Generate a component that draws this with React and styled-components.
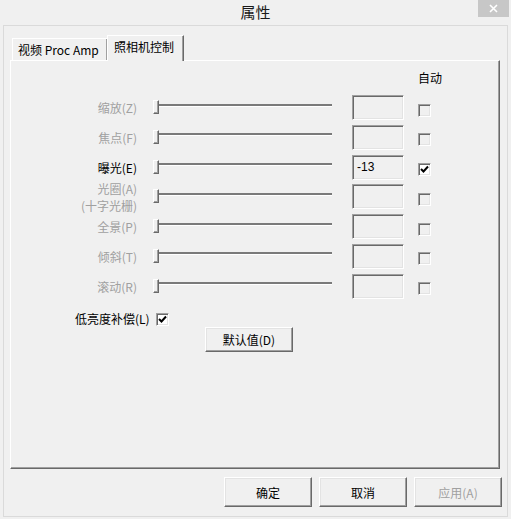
import React from 'react'
import styled, { createGlobalStyle } from 'styled-components'

const GlobalStyle = createGlobalStyle`
  html, body {
    margin: 0;
    padding: 0;
    background: #f0f0f0;
  }
  body {
    font-family: "Noto Sans CJK SC", "Noto Sans", sans-serif;
    font-size: 12px;
    color: #000;
  }
`

const Window = styled.div`
  width: 511px;
  height: 519px;
  background: #f0f0f0;
  display: flex;
  flex-direction: column;
`

const TitleBar = styled.div`
  height: 25px;
  display: grid;
  grid-template-columns: 1fr auto 1fr;
  align-items: start;
`

const Title = styled.div`
  grid-column: 2;
  font-size: 15px;
  line-height: 24px;
  color: #1a1a1a;
`

const CloseButton = styled.div`
  grid-column: 3;
  justify-self: end;
  margin-right: 2px;
  width: 31px;
  height: 17px;
  background: #c7c7c7;
  display: flex;
  align-items: center;
  justify-content: center;
`

const Body = styled.div`
  flex: 1;
  margin: 0 3px 2px 3px;
  border: 1px solid #dadada;
  padding: 9px 5px 9px 6px;
  display: flex;
  flex-direction: column;
`

const TabStrip = styled.div`
  height: 25px;
  margin-left: 2px;
  display: flex;
  align-items: flex-end;
  position: relative;
  z-index: 1;
`

const Tab = styled.div`
  box-sizing: border-box;
  width: ${p => p.$w}px;
  height: ${p => (p.$active ? 26 : 22)}px;
  margin-bottom: ${p => (p.$active ? -1 : 0)}px;
  margin-left: ${p => (p.$active ? -1 : 0)}px;
  border-top: 1px solid #fff;
  border-left: 1px solid #fff;
  border-right: 1px solid #696969;
  box-shadow: inset -1px 0 #a0a0a0;
  background: #f0f0f0;
  padding-left: ${p => (p.$active ? 6 : 5)}px;
  line-height: ${p => (p.$active ? 22 : 21)}px;
  white-space: nowrap;
`

const Panel = styled.div`
  flex: 1;
  margin-right: 2px;
  border: 1px solid;
  border-color: #fff #696969 #696969 #fff;
  box-shadow: inset -1px -1px #a0a0a0;
  padding: 9px 0 0 0;
  display: flex;
  flex-direction: column;
`

const AutoHeader = styled.div`
  height: 16px;
  line-height: 16px;
  padding-left: 407px;
  margin-bottom: 9px;
`

const Grid = styled.div`
  display: grid;
  grid-template-columns: 142px 199px 66px 13px;
  grid-auto-rows: 25px;
  row-gap: 4.8px;
  align-items: center;
`

const Label = styled.div`
  justify-self: end;
  padding-right: 16px;
  text-align: right;
  line-height: 17px;
  color: ${p => (p.$enabled ? '#000' : '#a0a0a0')};
  white-space: nowrap;
`

const Slider = styled.div`
  display: flex;
  align-items: center;
  width: 179px;
`

const Thumb = styled.div`
  box-sizing: border-box;
  width: 6px;
  height: 14px;
  margin-top: -1px;
  border: 1px solid;
  border-color: #fff #696969 #696969 #fff;
  box-shadow: inset -1px -1px #a0a0a0;
  background: #f0f0f0;
`

const Track = styled.div`
  flex: 1;
  height: 2px;
  margin-top: -5px;
  background: #7a7a7a;
  border-bottom: 1px solid #fff;
`

const ValueBox = styled.div`
  box-sizing: border-box;
  width: 52px;
  height: 25px;
  border: 1px solid;
  border-color: #a0a0a0 #fff #fff #a0a0a0;
  box-shadow: inset 1px 1px #696969, inset -1px -1px #e3e3e3;
  background: #f0f0f0;
  padding: 2px 0 0 4px;
  line-height: 18px;
  font-family: "Liberation Sans", "Noto Sans CJK SC", sans-serif;
  font-size: 12px;
`

const Check = styled.div`
  box-sizing: border-box;
  width: 13px;
  height: 13px;
  margin-top: ${p => p.$shift || 0}px;
  border: 1px solid;
  border-color: #a0a0a0 #fff #fff #a0a0a0;
  box-shadow: inset 1px 1px #696969, inset -1px -1px #e3e3e3;
  background: ${p => (p.$checked ? '#fff' : '#f0f0f0')};
  display: flex;
  align-items: center;
  justify-content: center;
`

const LowLightRow = styled.div`
  margin-top: 14px;
  height: 13px;
  padding-left: 64px;
  display: flex;
  align-items: center;
  gap: 6px;
  line-height: 16px;
`

const DefaultsButton = styled.div`
  box-sizing: border-box;
  margin: 1px 0 0 194px;
  width: 88px;
  height: 25px;
  border: 1px solid;
  border-color: #fff #696969 #696969 #fff;
  box-shadow: inset -1px -1px #a0a0a0, inset 1px 1px #e3e3e3;
  display: flex;
  align-items: center;
  justify-content: center;
`

const ButtonRow = styled.div`
  margin-top: 8px;
  display: flex;
  justify-content: flex-end;
  gap: 7px;
`

const DialogButton = styled.div`
  box-sizing: border-box;
  width: 88px;
  height: 30px;
  border: 1px solid;
  border-color: #fff #696969 #696969 #fff;
  box-shadow: inset -1px -1px #a0a0a0, inset 1px 1px #e3e3e3;
  display: flex;
  align-items: center;
  justify-content: center;
  color: ${p => (p.$disabled ? '#a0a0a0' : '#000')};
`

const CheckMark = () => (
  <svg width="9" height="9" viewBox="0 0 9 9">
    <path d="M1 4 L3.5 6.5 L8 1.5" fill="none" stroke="#000" strokeWidth="2" />
  </svg>
)

const rows = [
  { label: '缩放(Z)' },
  { label: '焦点(F)' },
  { label: '曝光(E)', enabled: true, value: '-13', auto: true },
  { label: ['光圈(A)', '(十字光栅)'] },
  { label: '全景(P)' },
  { label: '倾斜(T)' },
  { label: '滚动(R)' },
]

export default function App() {
  return (
    <Window>
      <GlobalStyle />
      <TitleBar>
        <Title>属性</Title>
        <CloseButton>
          <svg width="9" height="9" viewBox="0 0 9 9">
            <path d="M1 1 L8 8 M8 1 L1 8" stroke="#fff" strokeWidth="1.6" />
          </svg>
        </CloseButton>
      </TitleBar>
      <Body>
        <TabStrip>
          <Tab $w={96}>视频 Proc Amp</Tab>
          <Tab $w={77} $active>照相机控制</Tab>
        </TabStrip>
        <Panel>
          <AutoHeader>自动</AutoHeader>
          <Grid>
            {rows.map((r, i) => (
              <React.Fragment key={i}>
                <Label $enabled={r.enabled}>
                  {Array.isArray(r.label)
                    ? r.label.map(l => <div key={l}>{l}</div>)
                    : r.label}
                </Label>
                <Slider>
                  <Thumb />
                  <Track />
                </Slider>
                <ValueBox>{r.value}</ValueBox>
                <Check $checked={r.auto} $shift={5}>
                  {r.auto && <CheckMark />}
                </Check>
              </React.Fragment>
            ))}
          </Grid>
          <LowLightRow>
            <span>低亮度补偿(L)</span>
            <Check $checked>
              <CheckMark />
            </Check>
          </LowLightRow>
          <DefaultsButton>默认值(D)</DefaultsButton>
        </Panel>
        <ButtonRow>
          <DialogButton>确定</DialogButton>
          <DialogButton>取消</DialogButton>
          <DialogButton $disabled>应用(A)</DialogButton>
        </ButtonRow>
      </Body>
    </Window>
  )
}
